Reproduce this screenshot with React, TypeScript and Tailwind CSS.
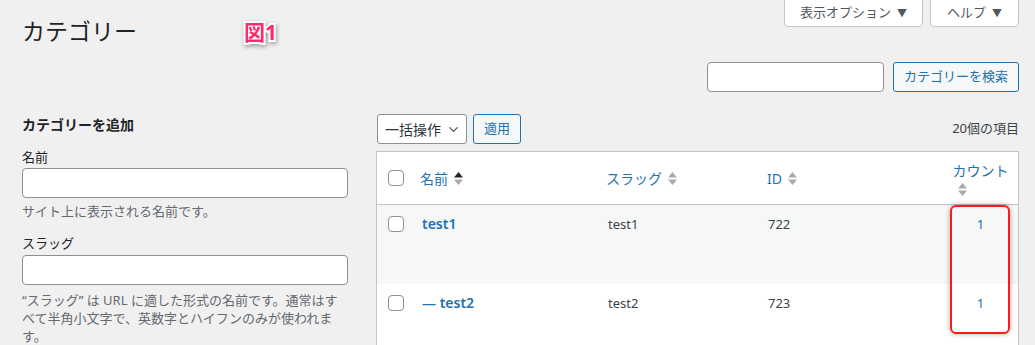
import { ChevronDown } from 'lucide-react';

const FONT = "font-['Noto_Sans','Noto_Sans_CJK_JP',sans-serif]";

function SortArrows({ active }: { active?: 'asc' | 'desc' }) {
  // stacked up/down triangles as in the WP list table
  return (
    <svg width="9" height="13" viewBox="0 0 9 13" className="shrink-0">
      <path d="M4.5 0 L9 5.5 L0 5.5 Z" fill={active === 'asc' ? '#1d2327' : '#a7aaad'} />
      <path d="M0 7.5 L9 7.5 L4.5 13 Z" fill={active === 'desc' ? '#1d2327' : '#a7aaad'} />
    </svg>
  );
}

function Checkbox() {
  return <div className="w-4 h-4 bg-white border border-[#8c8f94] rounded-[4px] shrink-0" />;
}

const rows = [
  { name: 'test1', slug: 'test1', id: 722, count: 1, bg: 'bg-[#f6f7f7]' },
  { name: '— test2', slug: 'test2', id: 723, count: 1, bg: 'bg-white' },
];

const cols = 'grid grid-cols-[35px_186px_161px_184px_1fr]';

export default function App() {
  return (
    <div className={`${FONT} w-[1035px] h-[345px] overflow-hidden bg-[#f0f0f1] pl-[22px] pr-[16px] text-[13px] text-[#3c434a]`}>
      {/* title + screen meta */}
      <div className="flex items-start justify-between">
        <div className="flex items-center mt-[17px]">
          <h1 className="text-[23px] leading-[29px] text-[#1d2327] font-normal">カテゴリー</h1>
          <span className="ml-[107px] text-[21px] leading-[24px] font-bold text-[#ff2a68] [-webkit-text-stroke:4px_white] [paint-order:stroke_fill] drop-shadow-[1px_2px_2px_rgba(0,0,0,0.35)]">
            図1
          </span>
        </div>
        <div className="flex gap-[7px] -mt-px">
          <button className="h-[28px] w-[139px] bg-white border border-[#c3c4c7] rounded-b-[4px] text-[#50575e] text-[13px] flex items-center justify-center gap-[6px]">
            表示オプション <span className="text-[10px]">▼</span>
          </button>
          <button className="h-[28px] w-[89px] bg-white border border-[#c3c4c7] rounded-b-[4px] text-[#50575e] text-[13px] flex items-center justify-center gap-[6px]">
            ヘルプ <span className="text-[10px]">▼</span>
          </button>
        </div>
      </div>

      {/* search */}
      <div className="flex justify-end gap-[9px] mt-[16px]">
        <div className="w-[177px] h-[30px] bg-white border border-[#8c8f94] rounded-[4px]" />
        <button className="w-[126px] h-[30px] bg-[#f6f7f7] border border-[#2271b1] rounded-[3px] text-[#2271b1] text-[13px]">
          カテゴリーを検索
        </button>
      </div>

      <div className="flex gap-[28px] mt-[22px]">
        {/* add form */}
        <div className="w-[326px] shrink-0">
          <h2 className="text-[14px] leading-[20px] font-semibold text-[#1d2327] mt-px">カテゴリーを追加</h2>
          <div className="mt-[13px] leading-[19px] text-[#1d2327]">名前</div>
          <div className="mt-px h-[30px] bg-white border border-[#8c8f94] rounded-[4px]" />
          <p className="mt-[4px] leading-[18px] text-[#646970]">サイト上に表示される名前です。</p>
          <div className="mt-[14px] leading-[19px] text-[#1d2327]">スラッグ</div>
          <div className="mt-[2px] h-[30px] bg-white border border-[#8c8f94] rounded-[4px]" />
          <p className="mt-[6px] leading-[18px] text-[#646970]">
            “スラッグ” は URL に適した形式の名前です。通常はす
            <br />
            べて半角小文字で、英数字とハイフンのみが使われま
            <br />
            す。
          </p>
        </div>

        {/* list table */}
        <div className="flex-1 min-w-0">
          <div className="flex items-center ml-px">
            <div className="w-[90px] h-[30px] bg-white border border-[#8c8f94] rounded-[3px] flex items-center justify-between pl-[7px] pr-[5px] text-[14px] text-[#2c3338]">
              一括操作
              <ChevronDown size={15} strokeWidth={2} className="text-[#50575e]" />
            </div>
            <button className="ml-[6px] w-[48px] h-[30px] bg-[#f6f7f7] border border-[#2271b1] rounded-[3px] text-[#2271b1] text-[13px]">
              適用
            </button>
            <div className="ml-auto text-[#3c434a]">20個の項目</div>
          </div>

          <div className="relative mt-[7px] bg-white border border-[#c3c4c7] border-b-0">
            <div className={`${cols} h-[53px] items-center border-b border-[#c3c4c7] text-[14px] text-[#2271b1]`}>
              <div className="pl-[11px]"><Checkbox /></div>
              <div className="pl-[8px] flex items-center gap-[6px]">名前 <SortArrows active="asc" /></div>
              <div className="pl-[8px] flex items-center gap-[6px]">スラッグ <SortArrows /></div>
              <div className="pl-[8px] flex items-center gap-[6px]">ID <SortArrows /></div>
              <div className="flex flex-col items-center">
                <span className="leading-[20px]">カウント</span>
                <span className="self-start ml-[15px] mt-[2px]"><SortArrows /></span>
              </div>
            </div>
            {rows.map((r) => (
              <div key={r.id} className={`${cols} h-[79px] items-start pt-[10px] ${r.bg}`}>
                <div className="pl-[11px] pt-[1px]"><Checkbox /></div>
                <div className="pl-[10px] text-[14px] leading-[18px] font-semibold text-[#2271b1]">{r.name}</div>
                <div className="pl-[10px] leading-[18px]">{r.slug}</div>
                <div className="pl-[9px] leading-[18px]">{r.id}</div>
                <div className="text-center leading-[18px] text-[#2271b1]">{r.count}</div>
              </div>
            ))}

            {/* highlight annotation around the count column */}
            <div className="absolute left-[573px] top-[53px] w-[60px] h-[129px] border-2 border-[#ff1a1a] rounded-[6px] shadow-[0_0_5px_rgba(0,0,0,0.35)] pointer-events-none" />
          </div>
        </div>
      </div>
    </div>
  );
}
